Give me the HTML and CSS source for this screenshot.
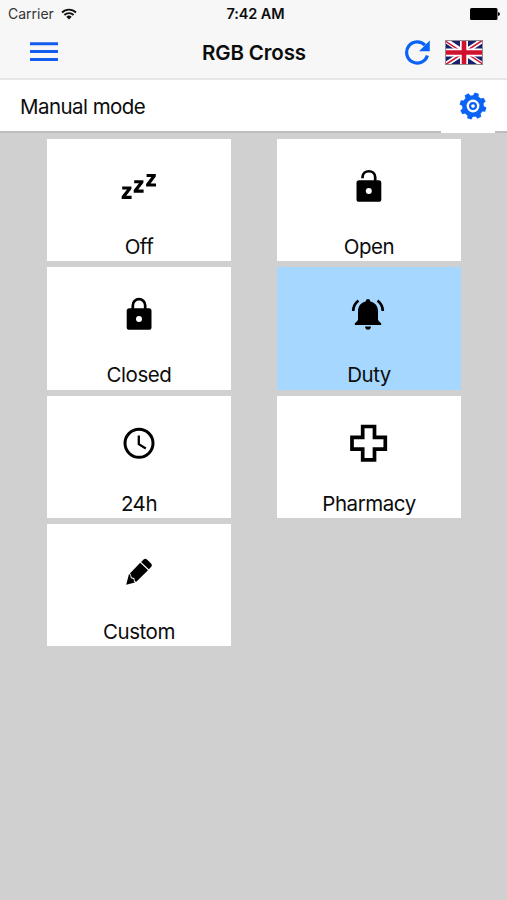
FILE: index.html
```html
<!DOCTYPE html>
<html lang="en">
<head>
<meta charset="utf-8">
<title>RGB Cross</title>
<link rel="stylesheet" href="styles.css">
</head>
<body>
<header class="top">
  <div class="status">
    <div class="carrier"><span>Carrier</span>
      <svg class="wifi" viewBox="0 0 16 12"><path d="M1 4.5a10 10 0 0 1 14 0M3.4 7a6.6 6.6 0 0 1 9.2 0" fill="none" stroke="#111" stroke-width="1.8"/><path d="M5.3 8.8a4 4 0 0 1 5.4 0L8 11.6z" fill="#111"/></svg>
    </div>
    <div class="time">7:42 AM</div>
    <svg class="battery" viewBox="0 0 30 12"><rect width="27.5" height="12" rx="1.5"/><path d="M28 4q2 .3 2 2t-2 2z"/></svg>
  </div>
  <nav class="bar">
    <svg class="menu" viewBox="0 0 28 20"><path d="M0 1.7h28M0 9.6h28M0 17.4h28" stroke="#135eed" stroke-width="3"/></svg>
    <h1 class="title">RGB Cross</h1>
    <div class="actions">
      <svg class="refresh" viewBox="0 0 25 25"><path d="M22.4 15.5A10.6 10.6 0 1 1 20 5.2" fill="none" stroke="#0b63f6" stroke-width="3.2"/><path d="M24.8 .4V11.3H14l4-4z" fill="#0b63f6"/></svg>
      <svg class="flag" viewBox="0 0 38 25"><rect width="38" height="25" fill="#17216b"/><path d="M0 0l38 25M38 0L0 25" stroke="#fff" stroke-width="5"/><path d="M0 .8l16 10.5M38 24.2L22 13.7M38 0L22 10.5M0 25l16-10.5" stroke="#cf1735" stroke-width="1.5"/><path d="M19 0v25M0 12.5h38" stroke="#fff" stroke-width="8"/><path d="M19 0v25M0 12.5h38" stroke="#d1122f" stroke-width="4.6"/><rect x=".5" y=".5" width="37" height="24" fill="none" stroke="#8d8790"/></svg>
    </div>
  </nav>
</header>
<section class="mode">
  <span class="mode-name">Manual mode</span>
  <div class="settings">
    <svg class="gear" viewBox="-14 -14 28 28">
      <g fill="#0b63f6"><path id="tooth" d="M-3-9L-2.2-13.3 2.2-13.3 3-9z" transform="rotate(16)"/><use href="#tooth" transform="rotate(45)"/><use href="#tooth" transform="rotate(90)"/><use href="#tooth" transform="rotate(135)"/><use href="#tooth" transform="rotate(180)"/><use href="#tooth" transform="rotate(225)"/><use href="#tooth" transform="rotate(270)"/><use href="#tooth" transform="rotate(315)"/></g>
      <circle r="8.6" fill="none" stroke="#0b63f6" stroke-width="4.4"/><circle r="2.9" fill="none" stroke="#0b63f6" stroke-width="2.2"/>
    </svg>
  </div>
</section>
<main class="grid">
  <div class="card"><svg class="icon" viewBox="0 0 40 40"><path id="zed" d="M3.2 20.4H12.4V23L7.2 29.800H12.600V32.900H2.700V30.300L8 23.500H3.200z"/><use href="#zed" x="12" y="-6.200"/><use href="#zed" x="24.400" y="-12.400"/></svg><span>Off</span></div>
  <div class="card"><svg class="icon" viewBox="0 0 40 40"><path d="M13.5 12.3v-1C13.5 3.2 26.2 3.2 26.2 11.3V16" fill="none" stroke="#000" stroke-width="2.7"/><rect x="7.5" y="14.2" width="24.8" height="21.6" rx="2.6"/><circle cx="19.8" cy="25" r="3" fill="#fff"/></svg><span>Open</span></div>
  <div class="card"><svg class="icon" viewBox="0 0 40 40"><path d="M13.8 16v-4.6a6.2 6.2 0 0 1 12.4 0V16" fill="none" stroke="#000" stroke-width="2.7"/><rect x="7.7" y="14.2" width="24.8" height="21.6" rx="2.6"/><circle cx="20" cy="25" r="3" fill="#fff"/></svg><span>Closed</span></div>
  <div class="card active"><svg class="icon" viewBox="0 0 40 40"><path d="M19 5c1.4 0 2.3.9 2.3 2.4C26 8.5 29 12 29 17v8.5q0 1.5 3.2 3.7V31H5.8v-1.8Q9 27 9 25.5V17C9 12 12 8.5 16.7 7.4 16.7 5.9 17.6 5 19 5zM16 32.5h6q-.5 3.2-3 3.2t-3-3.2z"/><path d="M4.2 17q0-6 5.2-10.5M33.8 17q0-6-5.2-10.5" fill="none" stroke="#000" stroke-width="2.7"/></svg><span>Duty</span></div>
  <div class="card"><svg class="icon" viewBox="0 0 40 40"><circle cx="20" cy="20.3" r="14" fill="none" stroke="#000" stroke-width="3"/><path d="M19.8 12.5v8.7l7 4.2" fill="none" stroke="#000" stroke-width="2.3"/></svg><span>24h</span></div>
  <div class="card"><svg class="icon" viewBox="0 0 40 40"><path d="M13.7 3.5H25.5V14.4H36.3V26.1H25.5V36.9H13.7V26.1H3V14.4H13.7z" fill="none" stroke="#000" stroke-width="3.7"/></svg><span>Pharmacy</span></div>
  <div class="card"><svg class="icon" viewBox="0 0 40 40"><path d="M24.6 8.5q1.6-1.6 3.4 0l4.3 4.3q1.3 1.5 0 3l-2.5 2.5-7.7-7.3z"/><path d="M21.2 11.7l7.8 7.5L17.3 30.8l-1.500-.6-.5-3.200-2.600-.4-.8-3.200-1-1z"/><path d="M10 22.900l1.300 1.200.5 3.200 2.800.6.300 2.600 1 .9L7.200 33.700z"/></svg><span>Custom</span></div>
</main>
</body>
</html>
```
FILE: styles.css
```css
* { box-sizing: border-box; }
body {
  margin: 0;
  min-height: 900px;
  background: #d0d0d0;
  color: #0c0c0c;
  font-family: Inter, "Liberation Sans", sans-serif;
}
svg { display: block; flex: none; }
.top {
  height: 80px;
  background: #f7f7f7;
  border-bottom: 2px solid #e6e6e6;
}
.status {
  height: 27px;
  padding: 0 7px 0 8px;
  display: grid;
  grid-template-columns: 1fr auto 1fr;
  align-items: center;
  font-size: 14px;
}
.carrier { display: flex; align-items: center; gap: 7px; color: #333; }
.wifi { width: 16px; height: 12px; }
.time { font-weight: 600; font-size: 14.5px; letter-spacing: -.1px; padding-left: 3px; }
.battery { width: 30px; height: 12px; justify-self: end; }
.bar {
  height: 51px;
  padding: 0 24px 0 30px;
  display: grid;
  grid-template-columns: 1fr auto 1fr;
  align-items: center;
}
.menu { width: 28px; height: 20px; margin-bottom: 2px; }
.title { margin: 0 5px 0 0; font-size: 20.5px; font-weight: 600; letter-spacing: -.15px; }
.actions { display: flex; justify-content: flex-end; align-items: center; gap: 15px; }
.refresh { width: 25px; height: 25px; }
.flag { width: 38px; height: 25px; }
.mode {
  height: 53px;
  padding: 0 12px 0 20px;
  display: flex;
  justify-content: space-between;
  background: linear-gradient(#fff 51px, #bdbdbd 51px);
}
.mode-name { line-height: 54px; font-size: 20.5px; letter-spacing: -.55px; }
.settings {
  width: 54px;
  height: 53px;
  background: #fff;
  display: flex;
  align-items: center;
  justify-content: center;
  padding: 0 0 2px 10px;
}
.gear { width: 28px; height: 28px; }
.grid {
  padding: 6px 46px 0 47px;
  display: grid;
  grid-template-columns: 184px 184px;
  column-gap: 46px;
  row-gap: 6px;
}
.card {
  height: 122.3px;
  padding-top: 27px;
  background: #fff;
  display: flex;
  flex-direction: column;
  align-items: center;
  font-size: 20.5px;
  letter-spacing: -.45px;
}
.card span { margin-top: 28px; line-height: 26px; }
.active { background: #a6d8ff; }
.icon { width: 40px; height: 40px; }
```
